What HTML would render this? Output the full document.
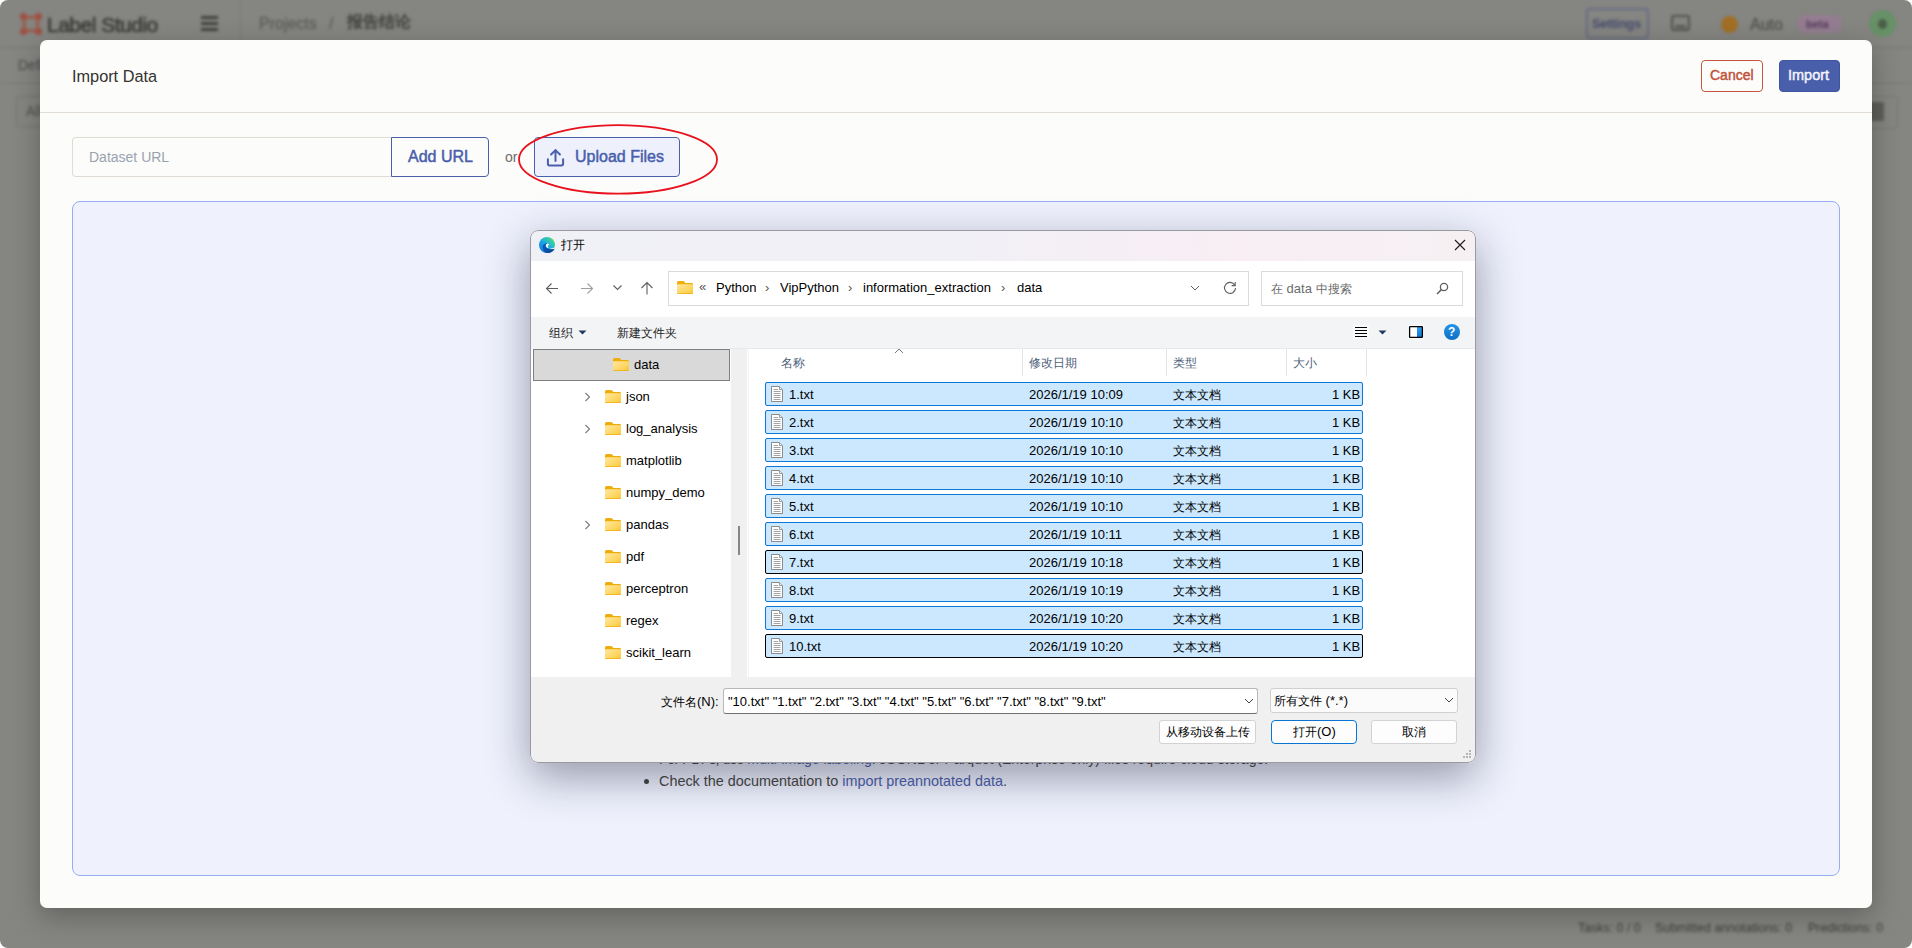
<!DOCTYPE html>
<html><head><meta charset="utf-8">
<style>
*{box-sizing:border-box}
html,body{margin:0;padding:0}
body{width:1912px;height:948px;overflow:hidden;position:relative;background:#fff;font-family:"Liberation Sans",sans-serif}
.abs{position:absolute}
#bg{position:absolute;left:0;top:0;width:1912px;height:948px;filter:blur(1.4px)}
#modal{position:absolute;left:40px;top:40px;width:1832px;height:868px;background:#fcfcfa;border-radius:7px;box-shadow:0 8px 28px rgba(0,0,0,.28)}
.t{position:absolute;white-space:nowrap;line-height:1}
#dlg{position:absolute;left:530px;top:230px;width:946px;height:533px;background:#fff;border-radius:8px;overflow:hidden;box-shadow:0 14px 44px rgba(25,28,55,.42)}
#dlg .t{font-size:13px;color:#000}
#dlg .c{font-size:12px}
</style></head>
<body>
<svg width="0" height="0" style="position:absolute"><defs>
<linearGradient id="fg" x1="0" y1="0" x2="1" y2="1"><stop offset="0" stop-color="#ffe79c"/><stop offset=".6" stop-color="#fdd766"/><stop offset="1" stop-color="#f8c535"/></linearGradient>
<linearGradient id="eg1" x1="0" y1="0" x2="1" y2="1"><stop offset="0" stop-color="#30c0e0"/><stop offset=".5" stop-color="#3bd38a"/><stop offset="1" stop-color="#69de4a"/></linearGradient>
<linearGradient id="eg2" x1="0" y1="0" x2="0" y2="1"><stop offset="0" stop-color="#0c8de0"/><stop offset="1" stop-color="#0a4fa8"/></linearGradient>
</defs></svg>

<div id="screen" style="position:absolute;left:0;top:0;width:1912px;height:948px;border-radius:8px;overflow:hidden;background:#858582">
<div id="bg">
<svg class="abs" style="left:19px;top:12px" width="24" height="24" viewBox="0 0 24 24"><path d="M4.5 4.5 Q12 6.5 19.5 4.5 Q17.5 12 19.5 19.5 Q12 17.5 4.5 19.5 Q6.5 12 4.5 4.5Z" fill="none" stroke="#976052" stroke-width="3.6"/><circle cx="4.5" cy="4.5" r="3.6" fill="#9e5142"/><circle cx="19.5" cy="4.5" r="3.6" fill="#9e5142"/><circle cx="4.5" cy="19.5" r="3.6" fill="#9e5142"/><circle cx="19.5" cy="19.5" r="3.6" fill="#9e5142"/></svg>
<div class="t" style="left:47px;top:14px;font-size:21px;color:#3d3d3a;letter-spacing:-.5px;-webkit-text-stroke:.7px #3d3d3a">Label Studio</div>
<div class="abs" style="left:201px;top:16px;width:17px;height:3px;background:#3f3f3c;box-shadow:0 6px 0 #3f3f3c,0 12px 0 #3f3f3c"></div>
<div class="abs" style="left:240px;top:0;width:1px;height:40px;background:#7a7a77"></div>
<div class="t" style="left:259px;top:16px;font-size:16px;color:#545451">Projects</div>
<div class="t" style="left:329px;top:16px;font-size:16px;color:#545451">/</div>
<div class="t" style="left:347px;top:14px;font-size:15.5px;color:#3e3e3b;font-weight:bold">报告结论</div>
<div class="abs" style="left:1586px;top:8px;width:63px;height:31px;border:2px solid #686d83;border-radius:4px"></div>
<div class="t" style="left:1592px;top:17px;font-size:13px;font-weight:bold;color:#464c6c;letter-spacing:-.3px">Settings</div>
<div class="abs" style="left:1671px;top:15px;width:19px;height:16px;border:2px solid #50504d;border-radius:3px"></div>
<div class="abs" style="left:1675px;top:25px;width:11px;height:3px;border-radius:2px 2px 0 0;background:#5a5a57"></div>
<div class="abs" style="left:1721px;top:16px;width:17px;height:17px;border-radius:50%;background:#a26f25"></div>
<div class="t" style="left:1750px;top:17px;font-size:16px;color:#474744">Auto</div>
<div class="abs" style="left:1797px;top:15px;width:45px;height:18px;border-radius:9px;background:#947d91"></div>
<div class="t" style="left:1806px;top:19px;font-size:11px;font-weight:bold;color:#553a5c">beta</div>
<div class="abs" style="left:1869px;top:10px;width:27px;height:27px;border-radius:50%;background:#679166"></div>
<div class="abs" style="left:1878px;top:19px;width:9px;height:10px;border-radius:50%;background:#4a5f48"></div>
<div class="abs" style="left:0;top:47px;width:1912px;height:1px;background:#777774"></div>
<div class="t" style="left:18px;top:58px;font-size:14px;color:#4a4a48">Default</div>
<div class="abs" style="left:16px;top:96px;width:80px;height:31px;border:1px solid #74746f;border-radius:4px"></div>
<div class="t" style="left:26px;top:104px;font-size:14px;color:#4f4f4c">All</div>
<div class="abs" style="left:0;top:83px;width:1912px;height:1px;background:#7a7a77"></div>
<div class="abs" style="left:1869px;top:102px;width:15px;height:19px;background:#5e5e5b;border-radius:2px"></div>
<div class="abs" style="left:1858px;top:96px;width:40px;height:33px;border:1px solid #7b7b77;border-radius:4px"></div>
<div class="t" style="left:1578px;top:922px;font-size:12.4px;color:#3c3c3a">Tasks: 0 / 0</div>
<div class="t" style="left:1655px;top:922px;font-size:12.4px;color:#3c3c3a">Submitted annotations: 0</div>
<div class="t" style="left:1808px;top:922px;font-size:12.4px;color:#3c3c3a">Predictions: 0</div>
</div>
<div id="modal">
<div class="t" style="left:32px;top:28px;font-size:16.3px;color:#333331">Import Data</div>
<div class="abs" style="left:1661px;top:20px;width:62px;height:32px;border:1px solid #c4553e;border-radius:4px"></div>
<div class="t" style="left:1670px;top:28px;font-size:14px;color:#c0513b;-webkit-text-stroke:.45px #c0513b">Cancel</div>
<div class="abs" style="left:1739px;top:20px;width:61px;height:32px;background:#4a5fab;border:1px solid #3f549c;border-radius:4px"></div>
<div class="t" style="left:1748px;top:28px;font-size:14.5px;color:#f4f5fb;-webkit-text-stroke:.45px #f4f5fb">Import</div>
<div class="abs" style="left:0;top:72px;width:1832px;height:1px;background:#e2ded6"></div>
<div class="abs" style="left:32px;top:97px;width:320px;height:40px;border:1px solid #e0dcd4;border-right:none;border-radius:4px 0 0 4px"></div>
<div class="t" style="left:49px;top:110px;font-size:14px;color:#9aa2b0">Dataset URL</div>
<div class="abs" style="left:351px;top:97px;width:98px;height:40px;border:1px solid #4a5fab;border-radius:0 4px 4px 0"></div>
<div class="t" style="left:368px;top:109px;font-size:16px;color:#4a5fab;-webkit-text-stroke:.5px #4a5fab">Add URL</div>
<div class="t" style="left:465px;top:110px;font-size:14px;color:#6e6d68">or</div>
<div class="abs" style="left:494px;top:97px;width:146px;height:40px;background:#eef1fc;border:1px solid #4a5fab;border-radius:4px"></div>
<svg class="abs" style="left:505.5px;top:107.5px" width="19" height="19" viewBox="0 0 18 18"><path d="M9 12.2V2M4.8 6.2L9 2L13.2 6.2" fill="none" stroke="#4a5fab" stroke-width="1.9" stroke-linecap="round" stroke-linejoin="round"/><path d="M1.8 10.6V15Q1.8 16.6 3.4 16.6H14.6Q16.2 16.6 16.2 15V10.6" fill="none" stroke="#4a5fab" stroke-width="1.9" stroke-linecap="round"/></svg>
<div class="t" style="left:535px;top:109px;font-size:16px;color:#4a5fab;-webkit-text-stroke:.5px #4a5fab">Upload Files</div>
<div class="abs" style="left:32px;top:161px;width:1768px;height:675px;background:#eff1fd;border:1px solid #98adf4;border-radius:8px"></div>
<div class="t" style="left:619px;top:712px;font-size:14px;color:#45453f"><b style="font-weight:normal;letter-spacing:-.42px">For PDFs, use </b><span style="color:#4a5fab">multi-image labeling</span>. JSONL or Parquet (Enterprise only) files require cloud storage.</div>
<div class="abs" style="left:604px;top:739px;width:5px;height:5px;border-radius:50%;background:#45453f"></div>
<div class="t" style="left:619px;top:734px;font-size:14.4px;color:#45453f">Check the documentation to <span style="color:#4a5fab">import preannotated data</span>.</div>
</div>
<div id="dlg"><div class="abs" style="left:1px;top:1px;width:944px;height:531px">
<div class="abs" style="left:0;top:0;width:944px;height:30px;background:linear-gradient(90deg,#f0f0f7 0%,#f1f0f6 45%,#f8eef4 75%,#f6f0f3 100%)"></div>
<svg class="abs" style="left:8px;top:6px" width="16" height="16" viewBox="0 0 16 16"><defs><linearGradient id="eb" x1="0" y1="1" x2="1" y2="0"><stop offset="0" stop-color="#0b74d8"/><stop offset=".45" stop-color="#1aa6e6"/><stop offset=".7" stop-color="#2ec6b4"/><stop offset="1" stop-color="#66e544"/></linearGradient><linearGradient id="ed" x1="0" y1="0" x2="1" y2="1"><stop offset="0" stop-color="#0d62c2"/><stop offset="1" stop-color="#0a3f8c"/></linearGradient></defs><circle cx="8" cy="8" r="8" fill="url(#eb)"/><path d="M10 11.2 C12.3 11.7 14.6 11.2 16.2 10.1 L16.2 11.8 C14.5 12.6 12 12.6 10 11.2Z" fill="#f1f0f7"/><path d="M3.6 9.6 C3.8 6.9 6.4 5.5 8.7 6.5 C7 6.9 6.3 8.5 7.1 9.9 C8 11.6 10.6 12.4 13.2 12.2 C14.2 12.1 15 11.9 15.6 11.7 C14.6 14.3 11.8 16.1 8.3 16 C5.6 15.9 3.4 13.3 3.6 9.6Z" fill="url(#ed)"/><path d="M8.7 6.5 C6.9 6.9 6.4 8.7 7.3 9.9 C7.9 10.7 8.9 11 9.9 10.7 C9 10.3 8.6 9.4 9 8.6 C9.3 8.1 9.8 7.9 10.4 8 C10.1 7.1 9.5 6.6 8.7 6.5Z" fill="#fff"/></svg>
<div class="t" style="left:30px;top:8px;font-size:12px"><span class="c">打开</span></div>
<svg class="abs" style="left:923px;top:8px" width="12" height="12" viewBox="0 0 12 12"><path d="M1 1L11 11M11 1L1 11" stroke="#1a1a1a" stroke-width="1.1"/></svg>
<svg class="abs" style="left:14px;top:51px" width="14" height="13" viewBox="0 0 14 13"><path d="M13 6.5H1.5M6.5 1.5L1.5 6.5L6.5 11.5" fill="none" stroke="#5f5f5f" stroke-width="1.1"/></svg>
<svg class="abs" style="left:49px;top:51px" width="14" height="13" viewBox="0 0 14 13"><path d="M1 6.5H12.5M7.5 1.5L12.5 6.5L7.5 11.5" fill="none" stroke="#a0a0a0" stroke-width="1.1"/></svg>
<svg class="abs" style="left:81px;top:53px" width="11" height="8" viewBox="0 0 11 8"><path d="M1.5 1.5L5.5 5.5L9.5 1.5" fill="none" stroke="#5f5f5f" stroke-width="1.1"/></svg>
<svg class="abs" style="left:109px;top:50px" width="14" height="14" viewBox="0 0 14 14"><path d="M7 13.5V1.5M1.5 7L7 1.5L12.5 7" fill="none" stroke="#5f5f5f" stroke-width="1.1"/></svg>
<div class="abs" style="left:137px;top:40px;width:581px;height:35px;border:1px solid #dadada"></div>
<svg class="abs" style="left:146px;top:50px" width="16" height="13" viewBox="0 0 16 13"><path d="M0 1.6 Q0 0 1.6 0 H5.8 Q6.8 0 7.4 0.7 L8.4 1.9 H14.6 Q16 1.9 16 3.3 V5 H0Z" fill="#efad0a"/><rect x="0" y="3.2" width="16" height="9.8" rx="1" fill="url(#fg)"/><rect x="0.3" y="12" width="15.4" height="1" rx=".5" fill="#eeb010" opacity=".8"/></svg>
<div class="t" style="left:168px;top:49px;font-size:13px;color:#555">«</div>
<div class="t" style="left:185px;top:50px;">Python</div>
<div class="t" style="left:234px;top:50px;font-size:13px;color:#555">›</div>
<div class="t" style="left:249px;top:50px;">VipPython</div>
<div class="t" style="left:317px;top:50px;font-size:13px;color:#555">›</div>
<div class="t" style="left:332px;top:50px;">information_extraction</div>
<div class="t" style="left:470px;top:50px;font-size:13px;color:#555">›</div>
<div class="t" style="left:486px;top:50px;">data</div>
<svg class="abs" style="left:659px;top:54px" width="10" height="6" viewBox="0 0 10 6"><path d="M1 1L5 5L9 1" fill="none" stroke="#5f5f5f" stroke-width="1"/></svg>
<svg class="abs" style="left:692px;top:50px" width="14" height="14" viewBox="0 0 14 14"><path d="M11.8 4.2A5.5 5.5 0 1 0 12.5 7" fill="none" stroke="#5f5f5f" stroke-width="1.1"/><path d="M12.2 1V4.6H8.6" fill="none" stroke="#5f5f5f" stroke-width="1.1"/></svg>
<div class="abs" style="left:730px;top:40px;width:202px;height:35px;border:1px solid #dadada"></div>
<div class="t" style="left:740px;top:51px;color:#6b6b6b"><span class="c">在</span> data <span class="c">中搜索</span></div>
<svg class="abs" style="left:905px;top:51px" width="13" height="13" viewBox="0 0 13 13"><circle cx="8" cy="5" r="3.6" fill="none" stroke="#5f5f5f" stroke-width="1.3"/><path d="M5.4 7.6L1 12" stroke="#5f5f5f" stroke-width="1.5"/></svg>
<div class="abs" style="left:0;top:86px;width:944px;height:32px;background:#f3f4f6"></div>
<div class="t" style="left:18px;top:95px;color:#1e1e1e"><span class="c">组织</span></div>
<svg class="abs" style="left:47px;top:99px" width="9" height="5" viewBox="0 0 9 5"><path d="M0.5 0.5H8.5L4.5 4.5Z" fill="#1f3a5f"/></svg>
<div class="t" style="left:86px;top:95px;color:#1e1e1e"><span class="c">新建文件夹</span></div>
<svg class="abs" style="left:822px;top:94px" width="16" height="14" viewBox="0 0 16 14"><rect x="0" y="0" width="16" height="14" fill="#fff" opacity=".6"/><path d="M2 2.5H14M2 5.5H14M2 8.5H14M2 11.5H14" stroke="#000" stroke-width="1"/></svg>
<svg class="abs" style="left:847px;top:99px" width="9" height="5" viewBox="0 0 9 5"><path d="M0.5 0.5H8.5L4.5 4.5Z" fill="#1f3a5f"/></svg>
<svg class="abs" style="left:877px;top:94px" width="16" height="14" viewBox="0 0 16 14"><defs><linearGradient id="pv" x1="0" y1="0" x2="0" y2="1"><stop offset="0" stop-color="#2a9ff0"/><stop offset="1" stop-color="#0f78d6"/></linearGradient></defs><rect x="1.5" y="1.5" width="13" height="11" fill="#fff" stroke="#fff" stroke-width="2"/><rect x="9" y="2" width="5" height="10" fill="url(#pv)"/><rect x="1.6" y="1.6" width="12.8" height="10.8" rx=".6" fill="none" stroke="#000" stroke-width="1.3"/></svg>
<div class="abs" style="left:913px;top:93px;width:16px;height:16px;border-radius:50%;background:linear-gradient(180deg,#2496e8,#0f6dc4)"></div>
<div class="t" style="left:917px;top:95px;font-size:12px;font-weight:bold;color:#fff;-webkit-text-stroke:0">?</div>
<div class="abs" style="left:200px;top:118px;width:16px;height:328px;background:#f0f0f0"></div>
<div class="abs" style="left:217px;top:118px;width:1px;height:328px;background:#f3f3f3"></div>
<div class="abs" style="left:207px;top:295px;width:2px;height:29px;background:#868686"></div>
<div class="abs" style="left:199px;top:117px;width:745px;height:1px;background:#e8e9eb"></div>
<div class="abs" style="left:2px;top:118px;width:197px;height:32px;background:#d9d9d9;border:1px solid #7f7f7f"></div>
<svg class="abs" style="left:82px;top:127px" width="16" height="13" viewBox="0 0 16 13"><path d="M0 1.6 Q0 0 1.6 0 H5.8 Q6.8 0 7.4 0.7 L8.4 1.9 H14.6 Q16 1.9 16 3.3 V5 H0Z" fill="#efad0a"/><rect x="0" y="3.2" width="16" height="9.8" rx="1" fill="url(#fg)"/><rect x="0.3" y="12" width="15.4" height="1" rx=".5" fill="#eeb010" opacity=".8"/></svg>
<div class="t" style="left:103px;top:127px;">data</div>
<svg class="abs" style="left:53px;top:161px" width="7" height="10" viewBox="0 0 7 10"><path d="M1.5 1L5.5 5L1.5 9" fill="none" stroke="#7a7a7a" stroke-width="1.1"/></svg>
<svg class="abs" style="left:74px;top:159px" width="16" height="13" viewBox="0 0 16 13"><path d="M0 1.6 Q0 0 1.6 0 H5.8 Q6.8 0 7.4 0.7 L8.4 1.9 H14.6 Q16 1.9 16 3.3 V5 H0Z" fill="#efad0a"/><rect x="0" y="3.2" width="16" height="9.8" rx="1" fill="url(#fg)"/><rect x="0.3" y="12" width="15.4" height="1" rx=".5" fill="#eeb010" opacity=".8"/></svg>
<div class="t" style="left:95px;top:159px;">json</div>
<svg class="abs" style="left:53px;top:193px" width="7" height="10" viewBox="0 0 7 10"><path d="M1.5 1L5.5 5L1.5 9" fill="none" stroke="#7a7a7a" stroke-width="1.1"/></svg>
<svg class="abs" style="left:74px;top:191px" width="16" height="13" viewBox="0 0 16 13"><path d="M0 1.6 Q0 0 1.6 0 H5.8 Q6.8 0 7.4 0.7 L8.4 1.9 H14.6 Q16 1.9 16 3.3 V5 H0Z" fill="#efad0a"/><rect x="0" y="3.2" width="16" height="9.8" rx="1" fill="url(#fg)"/><rect x="0.3" y="12" width="15.4" height="1" rx=".5" fill="#eeb010" opacity=".8"/></svg>
<div class="t" style="left:95px;top:191px;">log_analysis</div>
<svg class="abs" style="left:74px;top:223px" width="16" height="13" viewBox="0 0 16 13"><path d="M0 1.6 Q0 0 1.6 0 H5.8 Q6.8 0 7.4 0.7 L8.4 1.9 H14.6 Q16 1.9 16 3.3 V5 H0Z" fill="#efad0a"/><rect x="0" y="3.2" width="16" height="9.8" rx="1" fill="url(#fg)"/><rect x="0.3" y="12" width="15.4" height="1" rx=".5" fill="#eeb010" opacity=".8"/></svg>
<div class="t" style="left:95px;top:223px;">matplotlib</div>
<svg class="abs" style="left:74px;top:255px" width="16" height="13" viewBox="0 0 16 13"><path d="M0 1.6 Q0 0 1.6 0 H5.8 Q6.8 0 7.4 0.7 L8.4 1.9 H14.6 Q16 1.9 16 3.3 V5 H0Z" fill="#efad0a"/><rect x="0" y="3.2" width="16" height="9.8" rx="1" fill="url(#fg)"/><rect x="0.3" y="12" width="15.4" height="1" rx=".5" fill="#eeb010" opacity=".8"/></svg>
<div class="t" style="left:95px;top:255px;">numpy_demo</div>
<svg class="abs" style="left:53px;top:289px" width="7" height="10" viewBox="0 0 7 10"><path d="M1.5 1L5.5 5L1.5 9" fill="none" stroke="#7a7a7a" stroke-width="1.1"/></svg>
<svg class="abs" style="left:74px;top:287px" width="16" height="13" viewBox="0 0 16 13"><path d="M0 1.6 Q0 0 1.6 0 H5.8 Q6.8 0 7.4 0.7 L8.4 1.9 H14.6 Q16 1.9 16 3.3 V5 H0Z" fill="#efad0a"/><rect x="0" y="3.2" width="16" height="9.8" rx="1" fill="url(#fg)"/><rect x="0.3" y="12" width="15.4" height="1" rx=".5" fill="#eeb010" opacity=".8"/></svg>
<div class="t" style="left:95px;top:287px;">pandas</div>
<svg class="abs" style="left:74px;top:319px" width="16" height="13" viewBox="0 0 16 13"><path d="M0 1.6 Q0 0 1.6 0 H5.8 Q6.8 0 7.4 0.7 L8.4 1.9 H14.6 Q16 1.9 16 3.3 V5 H0Z" fill="#efad0a"/><rect x="0" y="3.2" width="16" height="9.8" rx="1" fill="url(#fg)"/><rect x="0.3" y="12" width="15.4" height="1" rx=".5" fill="#eeb010" opacity=".8"/></svg>
<div class="t" style="left:95px;top:319px;">pdf</div>
<svg class="abs" style="left:74px;top:351px" width="16" height="13" viewBox="0 0 16 13"><path d="M0 1.6 Q0 0 1.6 0 H5.8 Q6.8 0 7.4 0.7 L8.4 1.9 H14.6 Q16 1.9 16 3.3 V5 H0Z" fill="#efad0a"/><rect x="0" y="3.2" width="16" height="9.8" rx="1" fill="url(#fg)"/><rect x="0.3" y="12" width="15.4" height="1" rx=".5" fill="#eeb010" opacity=".8"/></svg>
<div class="t" style="left:95px;top:351px;">perceptron</div>
<svg class="abs" style="left:74px;top:383px" width="16" height="13" viewBox="0 0 16 13"><path d="M0 1.6 Q0 0 1.6 0 H5.8 Q6.8 0 7.4 0.7 L8.4 1.9 H14.6 Q16 1.9 16 3.3 V5 H0Z" fill="#efad0a"/><rect x="0" y="3.2" width="16" height="9.8" rx="1" fill="url(#fg)"/><rect x="0.3" y="12" width="15.4" height="1" rx=".5" fill="#eeb010" opacity=".8"/></svg>
<div class="t" style="left:95px;top:383px;">regex</div>
<svg class="abs" style="left:74px;top:415px" width="16" height="13" viewBox="0 0 16 13"><path d="M0 1.6 Q0 0 1.6 0 H5.8 Q6.8 0 7.4 0.7 L8.4 1.9 H14.6 Q16 1.9 16 3.3 V5 H0Z" fill="#efad0a"/><rect x="0" y="3.2" width="16" height="9.8" rx="1" fill="url(#fg)"/><rect x="0.3" y="12" width="15.4" height="1" rx=".5" fill="#eeb010" opacity=".8"/></svg>
<div class="t" style="left:95px;top:415px;">scikit_learn</div>
<div class="t" style="left:250px;top:125px;color:#4c607a"><span class="c">名称</span></div>
<svg class="abs" style="left:363px;top:117px" width="10" height="6" viewBox="0 0 10 6"><path d="M1 5L5 1L9 5" fill="none" stroke="#7a7a7a" stroke-width="1"/></svg>
<div class="abs" style="left:491px;top:118px;width:1px;height:27px;background:#e5e5e5"></div>
<div class="abs" style="left:635px;top:118px;width:1px;height:27px;background:#e5e5e5"></div>
<div class="abs" style="left:755px;top:118px;width:1px;height:27px;background:#e5e5e5"></div>
<div class="abs" style="left:835px;top:118px;width:1px;height:27px;background:#e5e5e5"></div>
<div class="t" style="left:498px;top:125px;color:#4c607a"><span class="c">修改日期</span></div>
<div class="t" style="left:642px;top:125px;color:#4c607a"><span class="c">类型</span></div>
<div class="t" style="left:762px;top:125px;color:#4c607a"><span class="c">大小</span></div>
<div class="abs" style="left:234px;top:151px;width:598px;height:24px;background:#cce8ff;border:1px solid #0a78d7;border-radius:2px"></div>
<svg class="abs" style="left:240px;top:155px" width="12" height="16" viewBox="0 0 12 16"><path d="M0.5 0.5 H8.3 L11.5 3.7 V15.5 H0.5Z" fill="#fff" stroke="#8a8a8a" stroke-width="1"/><path d="M8.5 0.8 V3.5 H11.2" fill="#f2f2f2" stroke="#9a9a9a" stroke-width="1"/><path d="M2.5 3.5H7M2.5 5.5H9.5M2.5 7.5H9.5M2.5 9.5H9.5M2.5 11.5H9.5M2.5 13.5H9.5" stroke="#a3a3a3" stroke-width="1"/></svg>
<div class="t" style="left:258px;top:157px;">1.txt</div>
<div class="t" style="left:498px;top:157px;">2026/1/19 10:09</div>
<div class="t" style="left:642px;top:157px;"><span class="c">文本文档</span></div>
<div class="t" style="left:801px;top:157px;">1 KB</div>
<div class="abs" style="left:234px;top:179px;width:598px;height:24px;background:#cce8ff;border:1px solid #0a78d7;border-radius:2px"></div>
<svg class="abs" style="left:240px;top:183px" width="12" height="16" viewBox="0 0 12 16"><path d="M0.5 0.5 H8.3 L11.5 3.7 V15.5 H0.5Z" fill="#fff" stroke="#8a8a8a" stroke-width="1"/><path d="M8.5 0.8 V3.5 H11.2" fill="#f2f2f2" stroke="#9a9a9a" stroke-width="1"/><path d="M2.5 3.5H7M2.5 5.5H9.5M2.5 7.5H9.5M2.5 9.5H9.5M2.5 11.5H9.5M2.5 13.5H9.5" stroke="#a3a3a3" stroke-width="1"/></svg>
<div class="t" style="left:258px;top:185px;">2.txt</div>
<div class="t" style="left:498px;top:185px;">2026/1/19 10:10</div>
<div class="t" style="left:642px;top:185px;"><span class="c">文本文档</span></div>
<div class="t" style="left:801px;top:185px;">1 KB</div>
<div class="abs" style="left:234px;top:207px;width:598px;height:24px;background:#cce8ff;border:1px solid #0a78d7;border-radius:2px"></div>
<svg class="abs" style="left:240px;top:211px" width="12" height="16" viewBox="0 0 12 16"><path d="M0.5 0.5 H8.3 L11.5 3.7 V15.5 H0.5Z" fill="#fff" stroke="#8a8a8a" stroke-width="1"/><path d="M8.5 0.8 V3.5 H11.2" fill="#f2f2f2" stroke="#9a9a9a" stroke-width="1"/><path d="M2.5 3.5H7M2.5 5.5H9.5M2.5 7.5H9.5M2.5 9.5H9.5M2.5 11.5H9.5M2.5 13.5H9.5" stroke="#a3a3a3" stroke-width="1"/></svg>
<div class="t" style="left:258px;top:213px;">3.txt</div>
<div class="t" style="left:498px;top:213px;">2026/1/19 10:10</div>
<div class="t" style="left:642px;top:213px;"><span class="c">文本文档</span></div>
<div class="t" style="left:801px;top:213px;">1 KB</div>
<div class="abs" style="left:234px;top:235px;width:598px;height:24px;background:#cce8ff;border:1px solid #0a78d7;border-radius:2px"></div>
<svg class="abs" style="left:240px;top:239px" width="12" height="16" viewBox="0 0 12 16"><path d="M0.5 0.5 H8.3 L11.5 3.7 V15.5 H0.5Z" fill="#fff" stroke="#8a8a8a" stroke-width="1"/><path d="M8.5 0.8 V3.5 H11.2" fill="#f2f2f2" stroke="#9a9a9a" stroke-width="1"/><path d="M2.5 3.5H7M2.5 5.5H9.5M2.5 7.5H9.5M2.5 9.5H9.5M2.5 11.5H9.5M2.5 13.5H9.5" stroke="#a3a3a3" stroke-width="1"/></svg>
<div class="t" style="left:258px;top:241px;">4.txt</div>
<div class="t" style="left:498px;top:241px;">2026/1/19 10:10</div>
<div class="t" style="left:642px;top:241px;"><span class="c">文本文档</span></div>
<div class="t" style="left:801px;top:241px;">1 KB</div>
<div class="abs" style="left:234px;top:263px;width:598px;height:24px;background:#cce8ff;border:1px solid #0a78d7;border-radius:2px"></div>
<svg class="abs" style="left:240px;top:267px" width="12" height="16" viewBox="0 0 12 16"><path d="M0.5 0.5 H8.3 L11.5 3.7 V15.5 H0.5Z" fill="#fff" stroke="#8a8a8a" stroke-width="1"/><path d="M8.5 0.8 V3.5 H11.2" fill="#f2f2f2" stroke="#9a9a9a" stroke-width="1"/><path d="M2.5 3.5H7M2.5 5.5H9.5M2.5 7.5H9.5M2.5 9.5H9.5M2.5 11.5H9.5M2.5 13.5H9.5" stroke="#a3a3a3" stroke-width="1"/></svg>
<div class="t" style="left:258px;top:269px;">5.txt</div>
<div class="t" style="left:498px;top:269px;">2026/1/19 10:10</div>
<div class="t" style="left:642px;top:269px;"><span class="c">文本文档</span></div>
<div class="t" style="left:801px;top:269px;">1 KB</div>
<div class="abs" style="left:234px;top:291px;width:598px;height:24px;background:#cce8ff;border:1px solid #0a78d7;border-radius:2px"></div>
<svg class="abs" style="left:240px;top:295px" width="12" height="16" viewBox="0 0 12 16"><path d="M0.5 0.5 H8.3 L11.5 3.7 V15.5 H0.5Z" fill="#fff" stroke="#8a8a8a" stroke-width="1"/><path d="M8.5 0.8 V3.5 H11.2" fill="#f2f2f2" stroke="#9a9a9a" stroke-width="1"/><path d="M2.5 3.5H7M2.5 5.5H9.5M2.5 7.5H9.5M2.5 9.5H9.5M2.5 11.5H9.5M2.5 13.5H9.5" stroke="#a3a3a3" stroke-width="1"/></svg>
<div class="t" style="left:258px;top:297px;">6.txt</div>
<div class="t" style="left:498px;top:297px;">2026/1/19 10:11</div>
<div class="t" style="left:642px;top:297px;"><span class="c">文本文档</span></div>
<div class="t" style="left:801px;top:297px;">1 KB</div>
<div class="abs" style="left:234px;top:319px;width:598px;height:24px;background:#cce8ff;border:1px solid #000;border-radius:2px"></div>
<svg class="abs" style="left:240px;top:323px" width="12" height="16" viewBox="0 0 12 16"><path d="M0.5 0.5 H8.3 L11.5 3.7 V15.5 H0.5Z" fill="#fff" stroke="#8a8a8a" stroke-width="1"/><path d="M8.5 0.8 V3.5 H11.2" fill="#f2f2f2" stroke="#9a9a9a" stroke-width="1"/><path d="M2.5 3.5H7M2.5 5.5H9.5M2.5 7.5H9.5M2.5 9.5H9.5M2.5 11.5H9.5M2.5 13.5H9.5" stroke="#a3a3a3" stroke-width="1"/></svg>
<div class="t" style="left:258px;top:325px;">7.txt</div>
<div class="t" style="left:498px;top:325px;">2026/1/19 10:18</div>
<div class="t" style="left:642px;top:325px;"><span class="c">文本文档</span></div>
<div class="t" style="left:801px;top:325px;">1 KB</div>
<div class="abs" style="left:234px;top:347px;width:598px;height:24px;background:#cce8ff;border:1px solid #0a78d7;border-radius:2px"></div>
<svg class="abs" style="left:240px;top:351px" width="12" height="16" viewBox="0 0 12 16"><path d="M0.5 0.5 H8.3 L11.5 3.7 V15.5 H0.5Z" fill="#fff" stroke="#8a8a8a" stroke-width="1"/><path d="M8.5 0.8 V3.5 H11.2" fill="#f2f2f2" stroke="#9a9a9a" stroke-width="1"/><path d="M2.5 3.5H7M2.5 5.5H9.5M2.5 7.5H9.5M2.5 9.5H9.5M2.5 11.5H9.5M2.5 13.5H9.5" stroke="#a3a3a3" stroke-width="1"/></svg>
<div class="t" style="left:258px;top:353px;">8.txt</div>
<div class="t" style="left:498px;top:353px;">2026/1/19 10:19</div>
<div class="t" style="left:642px;top:353px;"><span class="c">文本文档</span></div>
<div class="t" style="left:801px;top:353px;">1 KB</div>
<div class="abs" style="left:234px;top:375px;width:598px;height:24px;background:#cce8ff;border:1px solid #0a78d7;border-radius:2px"></div>
<svg class="abs" style="left:240px;top:379px" width="12" height="16" viewBox="0 0 12 16"><path d="M0.5 0.5 H8.3 L11.5 3.7 V15.5 H0.5Z" fill="#fff" stroke="#8a8a8a" stroke-width="1"/><path d="M8.5 0.8 V3.5 H11.2" fill="#f2f2f2" stroke="#9a9a9a" stroke-width="1"/><path d="M2.5 3.5H7M2.5 5.5H9.5M2.5 7.5H9.5M2.5 9.5H9.5M2.5 11.5H9.5M2.5 13.5H9.5" stroke="#a3a3a3" stroke-width="1"/></svg>
<div class="t" style="left:258px;top:381px;">9.txt</div>
<div class="t" style="left:498px;top:381px;">2026/1/19 10:20</div>
<div class="t" style="left:642px;top:381px;"><span class="c">文本文档</span></div>
<div class="t" style="left:801px;top:381px;">1 KB</div>
<div class="abs" style="left:234px;top:403px;width:598px;height:24px;background:#cce8ff;border:1px solid #000;border-radius:2px"></div>
<svg class="abs" style="left:240px;top:407px" width="12" height="16" viewBox="0 0 12 16"><path d="M0.5 0.5 H8.3 L11.5 3.7 V15.5 H0.5Z" fill="#fff" stroke="#8a8a8a" stroke-width="1"/><path d="M8.5 0.8 V3.5 H11.2" fill="#f2f2f2" stroke="#9a9a9a" stroke-width="1"/><path d="M2.5 3.5H7M2.5 5.5H9.5M2.5 7.5H9.5M2.5 9.5H9.5M2.5 11.5H9.5M2.5 13.5H9.5" stroke="#a3a3a3" stroke-width="1"/></svg>
<div class="t" style="left:258px;top:409px;">10.txt</div>
<div class="t" style="left:498px;top:409px;">2026/1/19 10:20</div>
<div class="t" style="left:642px;top:409px;"><span class="c">文本文档</span></div>
<div class="t" style="left:801px;top:409px;">1 KB</div>
<div class="abs" style="left:0;top:446px;width:944px;height:85px;background:#f0f0f0"></div>
<div class="t" style="left:130px;top:464px;"><span class="c">文件名</span>(N):</div>
<div class="abs" style="left:192px;top:457px;width:535px;height:26px;background:#fff;border:1px solid #b8b8b8;border-bottom-color:#6f6f6f;border-radius:3px"></div>
<div class="t" style="left:197px;top:464px;">"10.txt" "1.txt" "2.txt" "3.txt" "4.txt" "5.txt" "6.txt" "7.txt" "8.txt" "9.txt"</div>
<svg class="abs" style="left:713px;top:467px" width="10" height="6" viewBox="0 0 10 6"><path d="M1 1L5 5L9 1" fill="none" stroke="#444" stroke-width="1"/></svg>
<div class="abs" style="left:739px;top:457px;width:188px;height:25px;background:#fbfbfb;border:1px solid #d0d0d0;border-radius:3px"></div>
<div class="t" style="left:743px;top:463px;"><span class="c">所有文件</span> (*.*)</div>
<svg class="abs" style="left:913px;top:466px" width="10" height="6" viewBox="0 0 10 6"><path d="M1 1L5 5L9 1" fill="none" stroke="#444" stroke-width="1"/></svg>
<div class="abs" style="left:628px;top:489px;width:97px;height:24px;background:#fdfdfd;border:1px solid #d2d2d2;border-radius:3px"></div>
<div class="t" style="left:635px;top:494px;"><span class="c">从移动设备上传</span></div>
<div class="abs" style="left:740px;top:489px;width:86px;height:24px;background:#fdfdfd;border:1px solid #0a74d2;border-radius:4px"></div>
<div class="t" style="left:762px;top:494px;"><span class="c">打开</span>(O)</div>
<div class="abs" style="left:840px;top:489px;width:86px;height:24px;background:#fdfdfd;border:1px solid #d2d2d2;border-radius:3px"></div>
<div class="t" style="left:871px;top:494px;"><span class="c">取消</span></div>
<svg class="abs" style="left:932px;top:519px" width="9" height="9" viewBox="0 0 9 9" fill="#b5b5b5"><rect x="6" y="0" width="2" height="2"/><rect x="3" y="3" width="2" height="2"/><rect x="6" y="3" width="2" height="2"/><rect x="0" y="6" width="2" height="2"/><rect x="3" y="6" width="2" height="2"/><rect x="6" y="6" width="2" height="2"/></svg>
</div><svg class="abs" style="left:0;top:0" width="946" height="533"><rect x=".5" y=".5" width="945" height="532" rx="7.5" fill="none" stroke="#9a9ba1" stroke-width="1"/></svg>
</div>
<svg class="abs" style="left:0;top:0" width="1912" height="948">
  <ellipse cx="618" cy="159.4" rx="99" ry="34.3" fill="none" stroke="#e8111d" stroke-width="1.8"/>
</svg>
</div>
</body></html>
